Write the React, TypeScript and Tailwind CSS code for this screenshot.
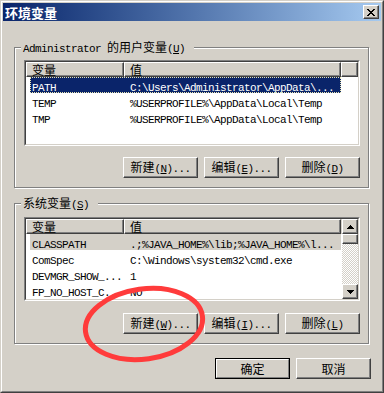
import React from "react";

const MONO = "font-['Liberation_Mono',monospace] text-[11px] tracking-[-0.6px]";
const CJK = "font-['Noto_Sans_CJK_SC',sans-serif] text-[12px] tracking-normal";

function T({ s }: { s: string }) {
  const out: React.ReactNode[] = [];
  const re = /&(.)|([\u3000-\u9fff\uff00-\uffef]+)|([^&\u3000-\u9fff\uff00-\uffef]+)/g;
  let m: RegExpExecArray | null;
  let k = 0;
  while ((m = re.exec(s)) !== null) {
    if (m[1]) out.push(<span key={k++} className={`${MONO} underline underline-offset-[1px]`}>{m[1]}</span>);
    else if (m[2]) out.push(<span key={k++} className={CJK}>{m[2]}</span>);
    else out.push(<span key={k++} className={MONO}>{m[3]}</span>);
  }
  return <span className="whitespace-pre leading-[14px]">{out}</span>;
}

const RAISED =
  "border border-t-white border-l-white border-r-[#404040] border-b-[#404040] shadow-[inset_-1px_-1px_0_#808080] bg-[#d4d0c8]";

function Btn({ label, def }: { label: string; def?: boolean }) {
  if (def) {
    return (
      <div className="h-[21px] w-[75px] border border-black">
        <div className="flex h-full w-full items-center justify-center border border-t-white border-l-white border-r-[#808080] border-b-[#808080] bg-[#d4d0c8] text-black">
          <T s={label} />
        </div>
      </div>
    );
  }
  return (
    <div className={`flex h-[21px] w-[75px] items-center justify-center text-black ${RAISED}`}>
      <T s={label} />
    </div>
  );
}

function Header({ filler }: { filler: boolean }) {
  const cell = `flex h-full items-center pl-[5px] ${RAISED}`;
  return (
    <div className="flex h-[15px] bg-[#d4d0c8] text-black">
      <div className={`${cell} w-[98px]`}>
        <T s="变量" />
      </div>
      <div className={`${cell} w-[217px]`}>
        <T s="值" />
      </div>
      {filler ? <div className={`${cell} flex-1`} /> : <div className="w-[1px] bg-[#d4d0c8]" />}
    </div>
  );
}

function Row({ name, value, sel }: { name: string; value: string; sel?: "active" | "inactive" }) {
  const selCls =
    sel === "active"
      ? "bg-[#0a246a] text-white outline-1 outline-dotted outline-[#e8e4b0] outline-offset-[-1px]"
      : sel === "inactive"
      ? "bg-[#d4d0c8] text-black"
      : "text-black";
  return (
    <div className="flex h-[16px] pl-[4px]">
      <div className={`flex h-full w-[311px] items-center ${selCls}`}>
        <div className="w-[94px] pl-[2px]">
          <T s={name} />
        </div>
        <div className="pl-[6px]">
          <T s={value} />
        </div>
      </div>
    </div>
  );
}

function ListBox({ h, children }: { h: string; children: React.ReactNode }) {
  return (
    <div className={`w-[336px] ${h} border border-t-[#808080] border-l-[#808080] border-b-white border-r-white bg-white`}>
      <div className="flex h-full w-full border border-t-[#404040] border-l-[#404040] border-b-[#d4d0c8] border-r-[#d4d0c8]">
        {children}
      </div>
    </div>
  );
}

function Arrow({ up }: { up: boolean }) {
  return (
    <svg width="7" height="4" viewBox="0 0 7 4" shapeRendering="crispEdges">
      <path
        fill="#000"
        d={
          up
            ? "M3 0h1v1H3z M2 1h3v1H2z M1 2h5v1H1z M0 3h7v1H0z"
            : "M0 0h7v1H0z M1 1h5v1H1z M2 2h3v1H2z M3 3h1v1H3z"
        }
      />
    </svg>
  );
}

function ScrollBar() {
  return (
    <div className="flex h-full w-[16px] flex-col">
      <div className={`flex h-[15px] items-center justify-center ${RAISED}`}>
        <Arrow up />
      </div>
      <div className={`h-[10px] ${RAISED}`} />
      <div className="flex-1 bg-[repeating-conic-gradient(#d4d0c8_0_25%,#ffffff_0_50%)] bg-[length:2px_2px]" />
      <div className={`flex h-[15px] items-center justify-center ${RAISED}`}>
        <Arrow up={false} />
      </div>
    </div>
  );
}

function Group({ label, children, className = "" }: { label: string; children: React.ReactNode; className?: string }) {
  return (
    <div
      className={`relative h-[141px] w-[355px] border border-[#808080] pl-[9px] shadow-[inset_1px_1px_0_#fff,1px_1px_0_#fff] ${className}`}
    >
      <div className="absolute left-[6px] top-[-8px] flex h-[14px] items-center bg-[#d4d0c8] pl-[2px] pr-[9px] text-black">
        <T s={label} />
      </div>
      {children}
    </div>
  );
}

export default function App() {
  return (
    <div className="relative h-[393px] w-[384px] select-none">
      <div className="h-[393px] w-[384px] border border-t-[#d4d0c8] border-l-[#d4d0c8] border-b-[#404040] border-r-[#404040] bg-[#d4d0c8]">
        <div className="h-full w-full border border-t-white border-l-white border-b-[#808080] border-r-[#808080] p-[1px]">
          {/* Title bar */}
          <div className="flex h-[18px] items-center justify-between bg-linear-to-r from-[#0a246a] to-[#a6caf0] pl-[2px] pr-[2px]">
            <span className="font-['Noto_Sans_CJK_SC',sans-serif] text-[13px] font-bold leading-[15px] text-white">
              环境变量
            </span>
            <div className={`flex h-[14px] w-[16px] items-center justify-center ${RAISED}`}>
              <svg width="8" height="7" viewBox="0 0 8 7" shapeRendering="crispEdges">
                <path
                  fill="#000"
                  d="M0 0h2v1H0z M6 0h2v1H6z M1 1h2v1H1z M5 1h2v1H5z M2 2h4v1H2z M3 3h2v1H3z M2 4h4v1H2z M1 5h2v1H1z M5 5h2v1H5z M0 6h2v1H0z M6 6h2v1H6z"
                />
              </svg>
            </div>
          </div>

          {/* Content */}
          <div className="pl-[11px] pt-[26px]">
            <Group label="Administrator 的用户变量(&U)" className="pt-[12px]">
              <ListBox h="h-[86px]">
                <div className="flex w-full flex-col">
                  <Header filler />
                  <Row name="PATH" value="C:\Users\Administrator\AppData\..." sel="active" />
                  <Row name="TEMP" value="%USERPROFILE%\AppData\Local\Temp" />
                  <Row name="TMP" value="%USERPROFILE%\AppData\Local\Temp" />
                </div>
              </ListBox>
              <div className="mt-[11px] flex w-[336px] justify-end gap-[6px]">
                <Btn label="新建(&N)..." />
                <Btn label="编辑(&E)..." />
                <Btn label="删除(&D)" />
              </div>
            </Group>

            <Group label="系统变量(&S)" className="mt-[15px] pt-[13px]">
              <ListBox h="h-[84px]">
                <div className="flex w-[316px] flex-col">
                  <Header filler={false} />
                  <Row name="CLASSPATH" value=".;%JAVA_HOME%\lib;%JAVA_HOME%\l..." sel="inactive" />
                  <Row name="ComSpec" value="C:\Windows\system32\cmd.exe" />
                  <Row name="DEVMGR_SHOW_..." value="1" />
                  <Row name="FP_NO_HOST_C..." value="NO" />
                </div>
                <ScrollBar />
              </ListBox>
              <div className="mt-[12px] flex w-[336px] justify-end gap-[6px]">
                <Btn label="新建(&W)..." />
                <Btn label="编辑(&I)..." />
                <Btn label="删除(&L)" />
              </div>
            </Group>

            <div className="mt-[14px] flex justify-end gap-[6px] pr-[10px]">
              <Btn label="确定" def />
              <Btn label="取消" />
            </div>
          </div>
        </div>
      </div>

      {/* Red annotation ellipse */}
      <svg className="pointer-events-none absolute left-0 top-0" width="384" height="393" viewBox="0 0 384 393">
        <ellipse
          cx="144"
          cy="324"
          rx="59"
          ry="35"
          transform="rotate(-8 144 324)"
          fill="none"
          stroke="#ff3b3b"
          strokeWidth="5"
        />
      </svg>
    </div>
  );
}
